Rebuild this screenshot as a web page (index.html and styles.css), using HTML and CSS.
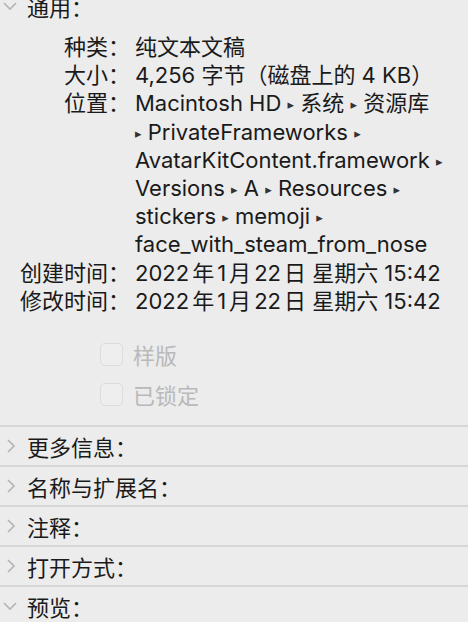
FILE: index.html
```html
<!DOCTYPE html>
<html>
<head>
    <title>简介</title>
    <link rel="stylesheet" href="styles.css">
</head>
<body>
    <div class="section open first">
        <div class="section-head">
            <svg class="chev" width="16" height="10" viewBox="0 0 16 10"><path d="M2 2 L8 8 L14 2" fill="none" stroke="#b3b3b3" stroke-width="1.6"/></svg>
            <span>通用：</span>
        </div>
        <div class="info">
            <div class="label">种类：</div>
            <div class="value">纯文本文稿</div>
            <div class="label">大小：</div>
            <div class="value">4,256 字节（磁盘上的 4 KB）</div>
            <div class="label">位置：</div>
            <div class="value">Macintosh HD <i>▸</i> 系统 <i>▸</i> 资源库<br>
                <i>▸</i> PrivateFrameworks <i>▸</i><br>
                AvatarKitContent.framework <i>▸</i><br>
                Versions <i>▸</i> A <i>▸</i> Resources <i>▸</i><br>
                stickers <i>▸</i> memoji <i>▸</i><br>
                face_with_steam_from_nose</div>
            <div class="label">创建时间：</div>
            <div class="value">2022<b></b>年<b></b>1<b></b>月<b></b>22<b></b>日 星期六 15:42</div>
            <div class="label">修改时间：</div>
            <div class="value">2022<b></b>年<b></b>1<b></b>月<b></b>22<b></b>日 星期六 15:42</div>
        </div>
        <div class="checks">
            <label class="check"><span class="box"></span>样版</label>
            <label class="check"><span class="box"></span>已锁定</label>
        </div>
    </div>
    <div class="section">
        <div class="section-head">
            <svg class="chev" width="16" height="14" viewBox="0 0 16 14"><path d="M6 1 L12 7 L6 13" fill="none" stroke="#b3b3b3" stroke-width="1.6"/></svg>
            <span>更多信息：</span>
        </div>
    </div>
    <div class="section">
        <div class="section-head">
            <svg class="chev" width="16" height="14" viewBox="0 0 16 14"><path d="M6 1 L12 7 L6 13" fill="none" stroke="#b3b3b3" stroke-width="1.6"/></svg>
            <span>名称与扩展名：</span>
        </div>
    </div>
    <div class="section">
        <div class="section-head">
            <svg class="chev" width="16" height="14" viewBox="0 0 16 14"><path d="M6 1 L12 7 L6 13" fill="none" stroke="#b3b3b3" stroke-width="1.6"/></svg>
            <span>注释：</span>
        </div>
    </div>
    <div class="section">
        <div class="section-head">
            <svg class="chev" width="16" height="14" viewBox="0 0 16 14"><path d="M6 1 L12 7 L6 13" fill="none" stroke="#b3b3b3" stroke-width="1.6"/></svg>
            <span>打开方式：</span>
        </div>
    </div>
    <div class="section">
        <div class="section-head">
            <svg class="chev" width="16" height="10" viewBox="0 0 16 10"><path d="M2 2 L8 8 L14 2" fill="none" stroke="#b3b3b3" stroke-width="1.6"/></svg>
            <span>预览：</span>
        </div>
    </div>
</body>
</html>
```

FILE: styles.css
```css
body {
    margin: 0;
    padding: 0;
    background-color: #ececec;
    color: #1a1a1a;
    font-family: Inter, "Noto Sans CJK SC", sans-serif;
    font-size: 22px;
    overflow: hidden;
}
.section {
    border-top: 2px solid #d6d6d6;
}
.section.first {
    border-top: none;
    margin-top: -13px;
}
.section-head {
    height: 38px;
    display: flex;
    align-items: center;
}
.chev {
    width: 16px;
    margin-left: 2px;
    margin-right: 9px;
}
.info {
    display: grid;
    grid-template-columns: 110px 1fr;
    column-gap: 5px;
    padding-left: 20px;
    padding-top: 8px;
    line-height: 28.2px;
}
.label {
    text-align: right;
    white-space: nowrap;
}
.value {
    white-space: nowrap;
}
.value i {
    font-style: normal;
    font-family: "DejaVu Sans", sans-serif;
    font-size: 13px;
    line-height: 0;
    color: #333;
    vertical-align: 2px;
}
.value b {
    display: inline-block;
    width: 3px;
}
.checks {
    padding: 19px 0 11px 100px;
}
.check {
    display: flex;
    align-items: center;
    height: 40px;
    color: #b9b9b9;
}
.box {
    width: 21px;
    height: 21px;
    border: 1px solid #dcdcdc;
    border-radius: 5px;
    background-color: #eeeeee;
    margin-right: 10px;
}
```
